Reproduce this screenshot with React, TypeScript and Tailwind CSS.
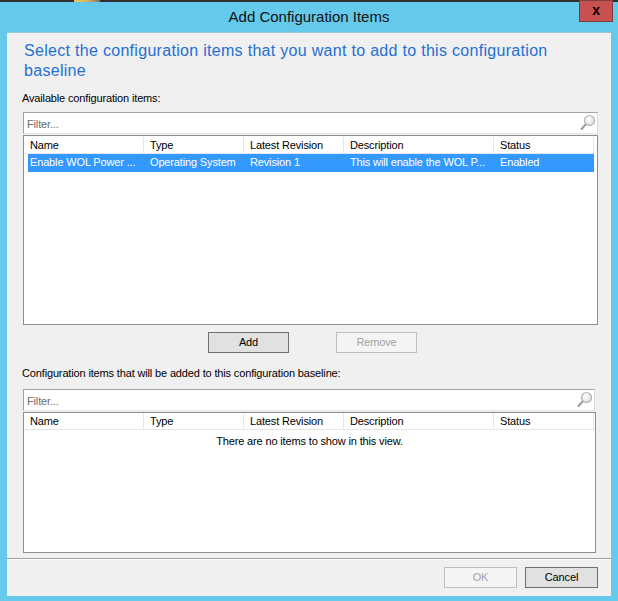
import React from "react";

const cols = [
  { label: "Name", w: "w-[120px]" },
  { label: "Type", w: "w-[100px]" },
  { label: "Latest Revision", w: "w-[100px]" },
  { label: "Description", w: "w-[150px]" },
  { label: "Status", w: "w-[100px]" },
];

function SearchIcon() {
  return (
    <svg width="18" height="18" viewBox="0 0 18 18" className="absolute right-[1px] top-[1px]">
      <defs>
        <radialGradient id="lens" cx="0.4" cy="0.35" r="0.7">
          <stop offset="0" stopColor="#ffffff" />
          <stop offset="1" stopColor="#dcdcdc" />
        </radialGradient>
      </defs>
      <line x1="7.6" y1="10.4" x2="3.6" y2="15" stroke="#9a9a9a" strokeWidth="2" strokeLinecap="round" />
      <circle cx="11.5" cy="6.5" r="5" fill="url(#lens)" stroke="#b4b4b4" strokeWidth="1.2" />
    </svg>
  );
}

function FilterBox({ w }: { w: string }) {
  return (
    <div className={`relative ml-[16px] ${w} h-[22px] bg-white border-t border-l border-[#a3a3a3] border-r border-r-[#dadada] border-b border-b-[#e6e6e6] pl-[3px] pt-[4px] leading-[14px] text-[#6d6d6d]`}>
      Filter...
      <SearchIcon />
    </div>
  );
}

function Header() {
  return (
    <div className="flex h-[17px] bg-white">
      {cols.map((c) => (
        <div
          key={c.label}
          className={`${c.w} h-[17px] border-r border-b border-[#e5e5e5] pl-[6px] pt-[1px] leading-[15px] text-black whitespace-nowrap`}
        >
          {c.label}
        </div>
      ))}
    </div>
  );
}

function Button({ label, disabled, w }: { label: string; disabled?: boolean; w: string }) {
  return (
    <div
      className={`${w} h-[21px] flex items-center justify-center border ${
        disabled ? "border-[#bfbfbf] bg-[#f4f4f4] text-[#a2a2a2]" : "border-[#707070] bg-[#e1e1e1] text-black"
      }`}
    >
      {label}
    </div>
  );
}

export default function App() {
  const row = ["Enable WOL Power ...", "Operating System", "Revision 1", "This will enable the WOL P...", "Enabled"];
  return (
    <div className="relative w-[618px] h-[601px] bg-[#64c9ea] overflow-hidden font-['Liberation_Sans',Arial,sans-serif] text-[11px] tracking-[-0.15px] text-black">
      <div className="h-[2px] bg-[#2f2f2f]" />
      <div className="absolute top-0 left-[74px] w-[26px] h-[2px] bg-gradient-to-r from-[#e9c76c] via-[#d9b45a] to-[#7d7467]" />
      <div className="h-[30px] flex items-center justify-center text-[15px] tracking-normal text-[#111]">
        Add Configuration Items
      </div>
      <div className="absolute left-[579px] top-0 w-[34px] h-[22px] bg-[#c75050] border border-[#7d3b3b] flex items-center justify-center">
        <span className="text-[14px] font-bold leading-none text-black -mt-[3px]">x</span>
      </div>

      <div className="ml-[7px] w-[604px] h-[564px] bg-[#f0f0f0] border-t border-[#9cc6d8] flex flex-col">
        <div className="mt-[8px] ml-[17px] w-[560px] text-[16px] leading-[20px] tracking-[0.3px] text-[#1f6fd6]">
          Select the configuration items that you want to add to this configuration baseline
        </div>
        <div className="mt-[10px] ml-[15px] leading-[14px]">Available configuration items:</div>

        <div className="mt-[7px]">
          <FilterBox w="w-[575px]" />
        </div>
        <div className="mt-[1px] ml-[16px] w-[575px] h-[190px] bg-white border border-[#8a8d94] pt-[1px]">
          <Header />
          <div className="ml-[4px] w-[566px] h-[18px] bg-[#3399ff] flex text-white leading-[14px] pt-[1px]">
            {row.map((t, i) => (
              <div
                key={i}
                className={`${i === 0 ? "w-[116px] pl-[2px]" : cols[i].w + " pl-[6px]"} whitespace-nowrap overflow-hidden`}
              >
                {t}
              </div>
            ))}
          </div>
        </div>

        <div className="mt-[7px] ml-[201px] flex gap-[47px]">
          <Button label="Add" w="w-[81px]" />
          <Button label="Remove" w="w-[81px]" disabled />
        </div>

        <div className="mt-[13px] ml-[15px] leading-[14px]">
          Configuration items that will be added to this configuration baseline:
        </div>

        <div className="mt-[9px]">
          <FilterBox w="w-[572px]" />
        </div>
        <div className="mt-[1px] ml-[16px] w-[573px] h-[141px] bg-white border border-[#8a8d94]">
          <Header />
          <div className="mt-[4px] text-center leading-[14px] text-black">There are no items to show in this view.</div>
        </div>

        <div className="mt-[5px] h-[1px] bg-[#a0a0a0]" />
        <div className="h-[1px] bg-[#fbfbfb]" />

        <div className="mt-[7px] flex justify-end gap-[8px] pr-[13px]">
          <Button label="OK" w="w-[73px]" disabled />
          <Button label="Cancel" w="w-[73px]" />
        </div>
      </div>
    </div>
  );
}
